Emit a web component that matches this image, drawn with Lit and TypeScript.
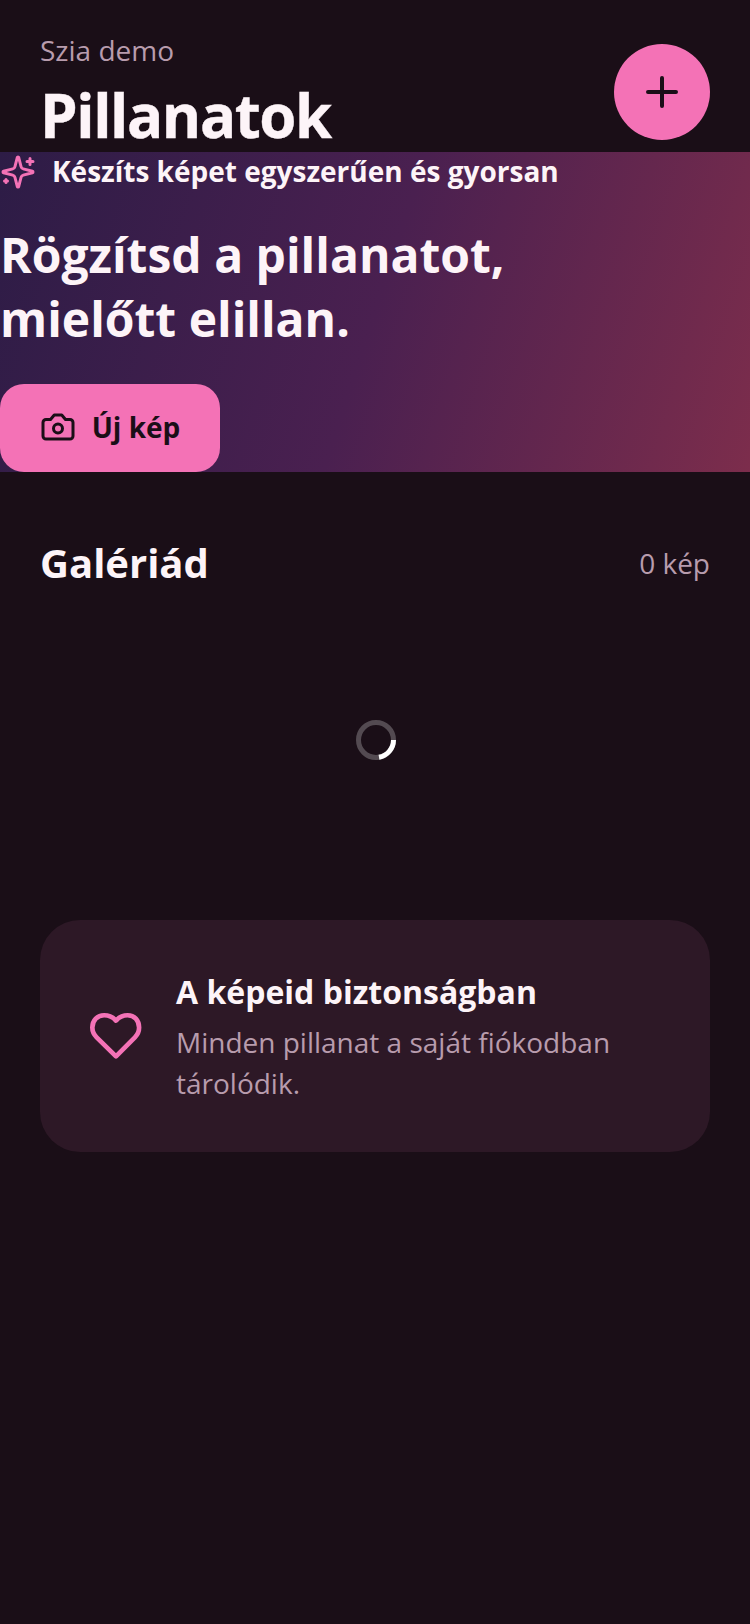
import { LitElement, html, css } from "lit";
import { customElement } from "lit/decorators.js";

@customElement("app-root")
export class AppRoot extends LitElement {
  static styles = css`
    :host {
      display: block;
      width: 750px;
      height: 1624px;
      background: #1a0e17;
      font-family: "Open Sans", sans-serif;
      color: #fdf4f8;
      overflow: hidden;
    }
    .header {
      display: flex;
      justify-content: space-between;
      align-items: flex-start;
      height: 152px;
      box-sizing: border-box;
      padding: 32px 40px 0;
    }
    .hello {
      font-size: 28px;
      line-height: 40px;
      color: #b89cad;
      margin-top: -2px;
    }
    .title {
      font-size: 60px;
      line-height: 72px;
      font-weight: 700;
      letter-spacing: -1.4px;
      -webkit-text-stroke: 0.4px #fdf4f8;
      margin-top: 9px;
    }
    .fab {
      width: 96px;
      height: 96px;
      margin-top: 12px;
      border-radius: 50%;
      background: #f472b6;
      display: flex;
      align-items: center;
      justify-content: center;
    }
    .hero {
      height: 320px;
      background: linear-gradient(108deg, #2d1c46 0%, #4a2050 50%, #7c2d4c 100%);
      display: flex;
      flex-direction: column;
    }
    .tag {
      display: flex;
      align-items: center;
      gap: 16px;
      height: 38px;
      font-size: 28px;
      line-height: 38px;
      font-weight: 700;
    }
    .tag svg {
      margin-top: 2px;
    }
    .headline {
      font-size: 48px;
      line-height: 64px;
      font-weight: 700;
      margin-top: 33px;
    }
    .cta {
      margin-top: auto;
      width: 220px;
      height: 88px;
      border-radius: 24px;
      background: #f472b6;
      display: flex;
      align-items: center;
      justify-content: center;
      gap: 16px;
      color: #1a0e17;
      font-size: 28px;
      font-weight: 700;
      padding-bottom: 2px;
      box-sizing: border-box;
    }
    .gallery {
      display: flex;
      justify-content: space-between;
      align-items: center;
      padding: 63px 40px 0;
      height: 56px;
    }
    .gallery h2 {
      margin: 0;
      font-size: 40px;
      line-height: 56px;
      font-weight: 700;
    }
    .count {
      font-size: 28px;
      color: #b89cad;
    }
    .loader {
      display: flex;
      justify-content: center;
      margin-top: 129px;
      height: 40px;
      padding-left: 2px;
    }
    .card {
      margin: 160px 40px 0;
      height: 232px;
      box-sizing: border-box;
      border-radius: 40px;
      background: #2d1826;
      display: flex;
      align-items: center;
      padding: 0 48px;
      gap: 32px;
    }
    .text {
      padding-top: 1px;
    }
    .card h3 {
      margin: 0;
      font-size: 32px;
      line-height: 44px;
      font-weight: 700;
    }
    .card p {
      margin: 8px 0 0;
      font-size: 28px;
      line-height: 41px;
      color: #b89cad;
    }
    svg {
      display: block;
      flex: none;
    }
  `;

  render() {
    return html`
      <div class="header">
        <div>
          <div class="hello">Szia demo</div>
          <div class="title">Pillanatok</div>
        </div>
        <div class="fab">
          <svg width="48" height="48" viewBox="0 0 24 24" fill="none" stroke="#1a0e17" stroke-width="2" stroke-linecap="round">
            <path d="M5 12h14M12 5v14" />
          </svg>
        </div>
      </div>
      <section class="hero">
        <div class="tag">
          <svg width="36" height="36" viewBox="0 0 24 24" fill="none" stroke="#f472b6" stroke-width="2" stroke-linecap="round" stroke-linejoin="round">
            <path d="M9.94 15.5A2 2 0 0 0 8.5 14.06L2.36 12.48a.5.5 0 0 1 0-.96L8.5 9.94A2 2 0 0 0 9.94 8.5l1.58-6.14a.5.5 0 0 1 .96 0l1.58 6.14a2 2 0 0 0 1.44 1.44l6.14 1.58a.5.5 0 0 1 0 .96l-6.14 1.58a2 2 0 0 0-1.44 1.44l-1.58 6.14a.5.5 0 0 1-.96 0z" />
            <path d="M20 3v4M22 5h-4M4 17v2M5 18H3" />
          </svg>
          <span>Készíts képet egyszerűen és gyorsan</span>
        </div>
        <div class="headline">Rögzítsd a pillanatot,<br />mielőtt elillan.</div>
        <div class="cta">
          <svg width="36" height="36" viewBox="0 0 24 24" fill="none" stroke="#1a0e17" stroke-width="2" stroke-linecap="round" stroke-linejoin="round">
            <path d="M14.5 4h-5L7 7H4a2 2 0 0 0-2 2v9a2 2 0 0 0 2 2h16a2 2 0 0 0 2-2V9a2 2 0 0 0-2-2h-3z" />
            <circle cx="12" cy="13" r="3" />
          </svg>
          <span>Új kép</span>
        </div>
      </section>
      <div class="gallery">
        <h2>Galériád</h2>
        <span class="count">0 kép</span>
      </div>
      <div class="loader">
        <svg width="40" height="40" viewBox="0 0 40 40" fill="none" stroke-width="5">
          <circle cx="20" cy="20" r="17.5" stroke="#ffffff" stroke-opacity="0.25" />
          <path d="M37.5 20A17.5 17.5 0 0 1 23 37.2" stroke="#ffffff" />
        </svg>
      </div>
      <div class="card">
        <svg width="56" height="56" viewBox="0 0 24 24" fill="none" stroke="#f472b6" stroke-width="2" stroke-linecap="round" stroke-linejoin="round">
          <path d="M12 20.7L3.7 12.6C2.5 11.4 1.86 10 1.86 8.4C1.86 5.3 4.1 3.1 6.9 3.1C8.9 3.1 10.7 3.9 12 5.4C13.3 3.9 15.1 3.1 17 3.1C19.8 3.1 21.9 5.3 21.9 8.4C21.9 10 21.3 11.4 20.1 12.6Z" />
        </svg>
        <div class="text">
          <h3>A képeid biztonságban</h3>
          <p>Minden pillanat a saját fiókodban tárolódik.</p>
        </div>
      </div>
    `;
  }
}
